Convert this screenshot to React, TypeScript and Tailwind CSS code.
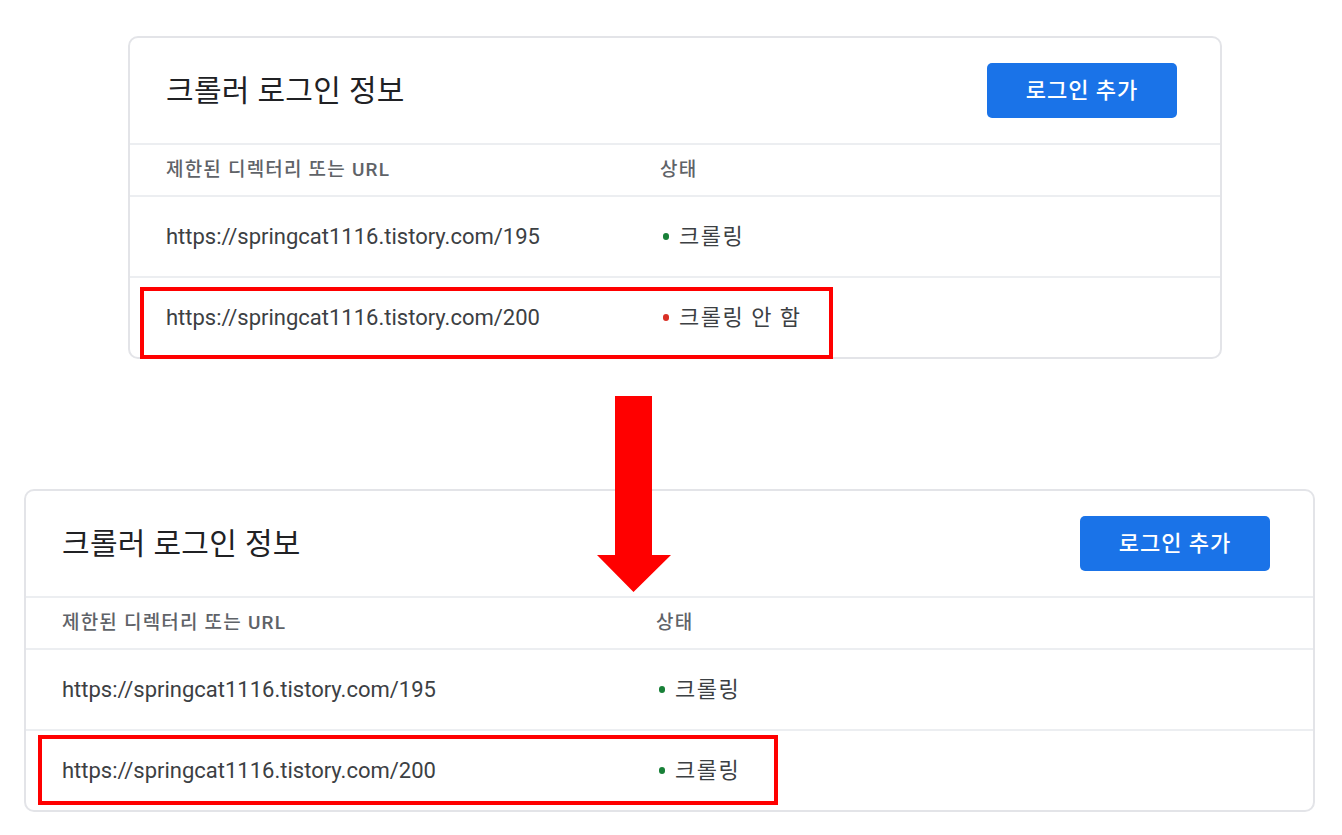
import React from "react";

type Row = { url: string; ok: boolean; label: string };

function Card({
  width,
  left,
  statusLeft,
  rows,
  box,
}: {
  width: string;
  left: string;
  statusLeft: string;
  rows: Row[];
  box: React.ReactNode;
}) {
  return (
    <div className={`${width} ${left} rounded-[10px] border-2 border-[#e3e4e8] bg-white`}>
      <div className="flex h-[105px] items-center justify-between pl-[36px] pr-[43px]">
        <div className="text-[30px] text-[#202124] tracking-[0.3px]">크롤러 로그인 정보</div>
        <div className="flex h-[55px] w-[190px] items-center justify-center rounded-[5px] bg-[#1a73e8] text-[22px] font-medium tracking-[1px] text-white">
          로그인 추가
        </div>
      </div>
      <div className="flex h-[52px] items-center border-t-2 border-[#eceef1] pl-[36px] text-[19px] font-medium tracking-[1.2px] text-[#5f6368]">
        <div className={statusLeft}>제한된 디렉터리 또는 URL</div>
        <div>상태</div>
      </div>
      {rows.map((r, i) => (
        <div
          key={i}
          className="relative flex h-[81px] items-center border-t-2 border-[#eceef1] pl-[36px] text-[22px] text-[#3c4043]"
        >
          <div className={statusLeft}>{r.url}</div>
          <div className="flex items-center">
            <span
              className={`mr-[10px] ml-[3px] inline-block h-[7px] w-[6px] rounded-full ${
                r.ok ? "bg-[#188038]" : "bg-[#d93025]"
              }`}
            />
            <span className="tracking-[1.5px]">{r.label}</span>
          </div>
          {i === rows.length - 1 ? box : null}
        </div>
      ))}
    </div>
  );
}

export default function App() {
  return (
    <div
      className="relative h-[835px] w-[1342px] overflow-hidden bg-white pt-[36px]"
      style={{ fontFamily: "Roboto, 'Noto Sans CJK KR', sans-serif" }}
    >
      <Card
        width="w-[1094px]"
        left="ml-[128px]"
        statusLeft="w-[494px]"
        rows={[
          { url: "https://springcat1116.tistory.com/195", ok: true, label: "크롤링" },
          { url: "https://springcat1116.tistory.com/200", ok: false, label: "크롤링 안 함" },
        ]}
        box={
          <div className="pointer-events-none absolute left-[10px] top-[9px] h-[72px] w-[693px] border-[4px] border-[#ff0000]" />
        }
      />
      <div className="h-[130px]" />
      <Card
        width="w-[1291px]"
        left="ml-[24px]"
        statusLeft="w-[594px]"
        rows={[
          { url: "https://springcat1116.tistory.com/195", ok: true, label: "크롤링" },
          { url: "https://springcat1116.tistory.com/200", ok: true, label: "크롤링" },
        ]}
        box={
          <div className="pointer-events-none absolute left-[12px] top-[4px] h-[70px] w-[740px] border-[4px] border-[#ff0000]" />
        }
      />
      <svg
        className="absolute left-[596px] top-[396px]"
        width="76"
        height="197"
        viewBox="0 0 76 197"
      >
        <polygon points="19,0 56,0 56,159 75,159 37.5,196 1,159 19,159" fill="#ff0000" />
      </svg>
    </div>
  );
}
